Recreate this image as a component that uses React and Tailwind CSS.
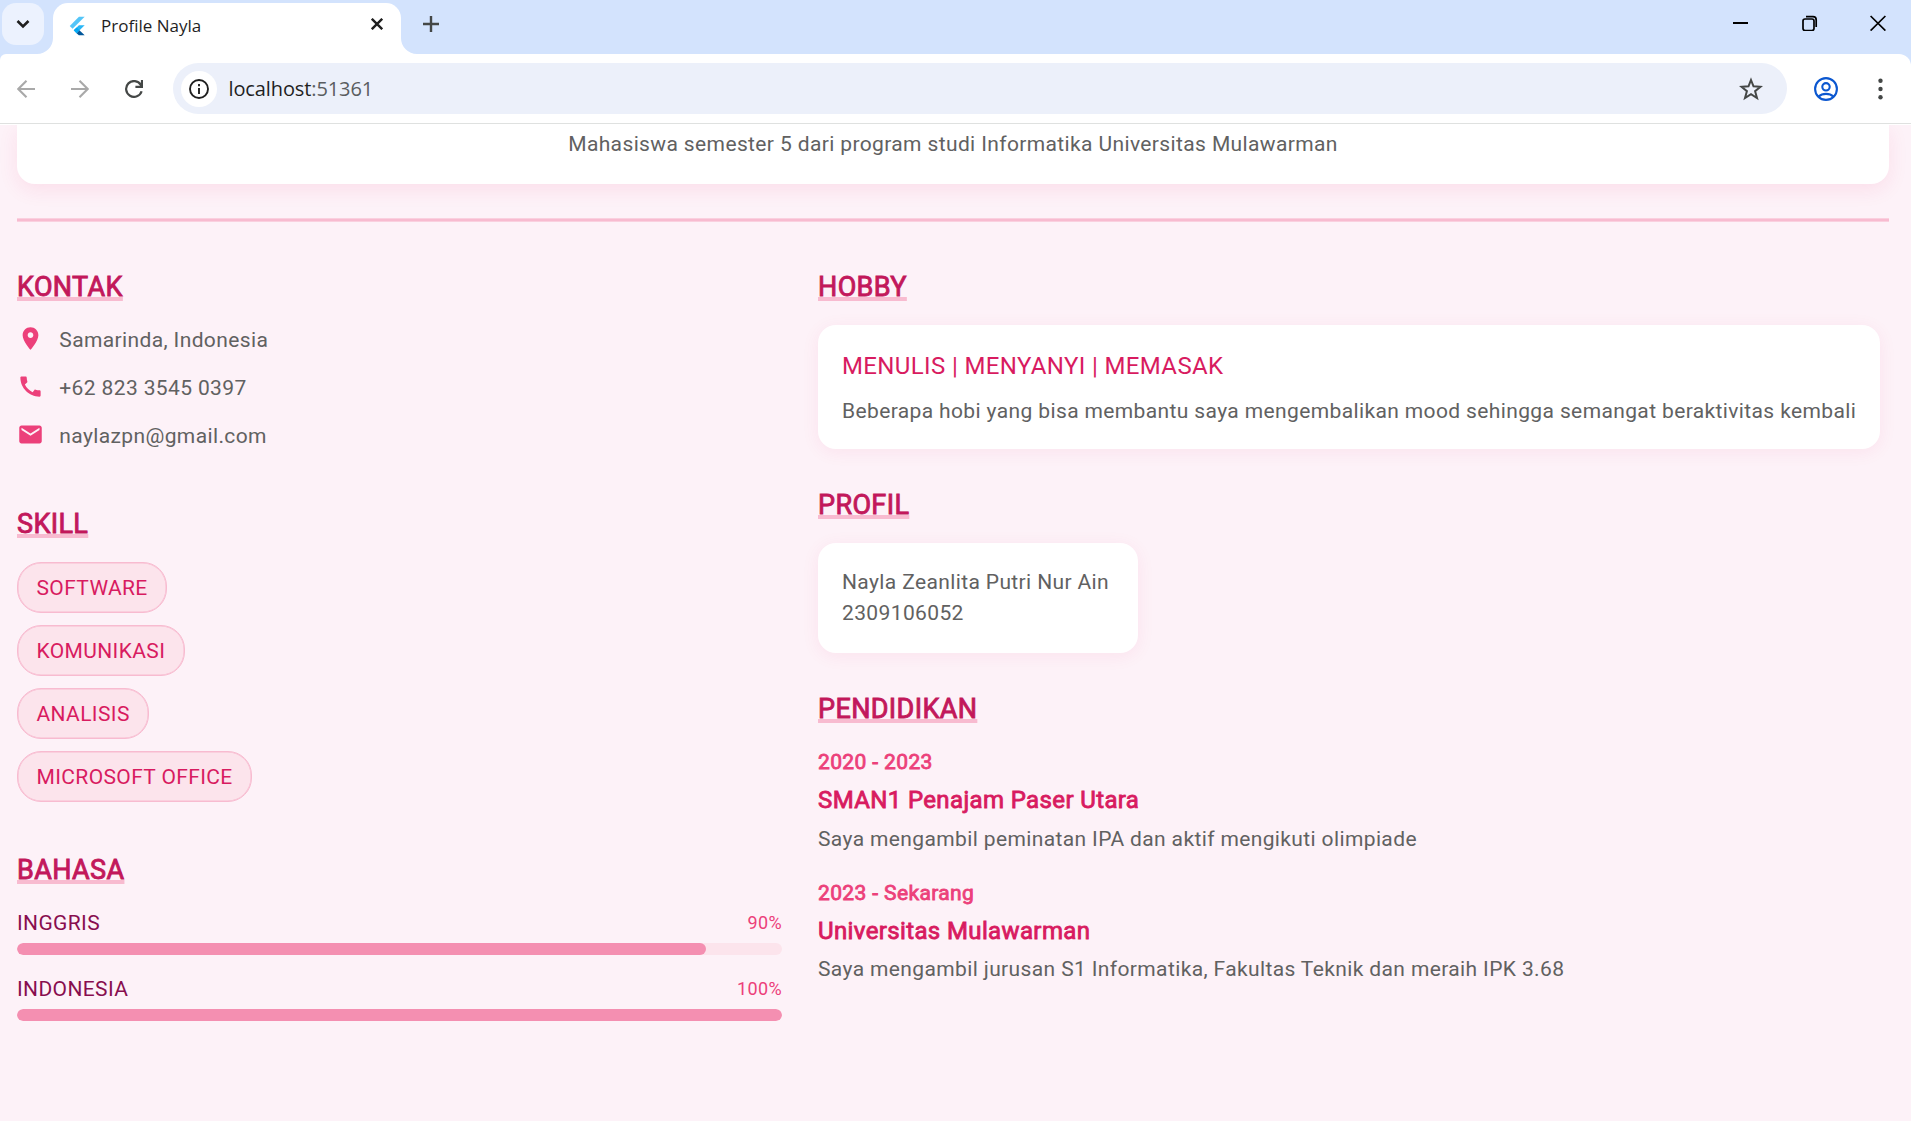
import React from 'react';

const SKILLS = ['SOFTWARE', 'KOMUNIKASI', 'ANALISIS', 'MICROSOFT OFFICE'];

const LANGUAGES = [
  { name: 'INGGRIS', level: 90 },
  { name: 'INDONESIA', level: 100 },
];

const EDUCATION = [
  {
    years: '2020 - 2023',
    school: 'SMAN1 Penajam Paser Utara',
    note: 'Saya mengambil peminatan IPA dan aktif mengikuti olimpiade',
  },
  {
    years: '2023 - Sekarang',
    school: 'Universitas Mulawarman',
    note: 'Saya mengambil jurusan S1 Informatika, Fakultas Teknik dan meraih IPK 3.68',
  },
];

const CONTACTS = [
  {
    text: 'Samarinda, Indonesia',
    d: 'M12 2C8.13 2 5 5.13 5 9c0 5.25 7 13 7 13s7-7.75 7-13c0-3.87-3.13-7-7-7zm0 9.5c-1.38 0-2.5-1.12-2.5-2.5s1.12-2.5 2.5-2.5 2.5 1.12 2.5 2.5-1.12 2.5-2.5 2.5z',
  },
  {
    text: '+62 823 3545 0397',
    d: 'M20.01 15.38c-1.23 0-2.42-.2-3.53-.56-.35-.12-.74-.03-1.01.24l-1.57 1.97c-2.83-1.35-5.48-3.9-6.89-6.83l1.95-1.66c.27-.28.35-.67.24-1.02-.37-1.11-.56-2.3-.56-3.53 0-.54-.45-.99-.99-.99H4.19C3.65 3 3 3.24 3 3.99 3 13.28 10.73 21 20.01 21c.71 0 .99-.63.99-1.18v-3.45c0-.54-.45-.99-.99-.99z',
  },
  {
    text: 'naylazpn@gmail.com',
    d: 'M20 4H4c-1.1 0-1.99.9-1.99 2L2 18c0 1.1.9 2 2 2h16c1.1 0 2-.9 2-2V6c0-1.1-.9-2-2-2zm0 4l-8 5-8-5V6l8 5 8-5v2z',
  },
];

function TabStrip() {
  return (
    <div className="flex h-[54px] items-start bg-[#d3e3fd]">
      <button className="ml-[2px] mt-[3px] flex h-[42px] w-[42px] shrink-0 items-center justify-center rounded-[14px] bg-[#ecf2fe]">
        <svg width="14" height="10" viewBox="0 0 14 10" fill="none" stroke="#1f1f1f" strokeWidth="2.600">
          <path d="M1.500 2l5.500 5.500L12.500 2" />
        </svg>
      </button>
      <div className="-ml-[7px] flex h-full items-end">
        <svg width="16" height="16" viewBox="0 0 16 16" fill="#fff">
          <path d="M16 0v16H0A16 16 0 0 0 16 0z" />
        </svg>
        <div className="flex h-[51px] w-[348px] items-center rounded-t-[15px] bg-white">
          <svg className="ml-[14px] mb-[5px]" width="20" height="20" viewBox="0 0 24 24">
            <path fill="#54c5f8" d="M14.314 1L3.300 12l3.400 3.400L21.200 1z" />
            <path fill="#29b6f6" d="M14.300 11l-6.200 6.200 3.400 3.400L21.200 11z" />
            <path fill="#01579b" d="M11.500 20.600l3.400-3.400L21.200 23.200h-7z" />
            <path fill="#03a9f4" d="M8.100 17.200l3.400-3.400 3.400 3.400-3.400 3.400z" />
          </svg>
          <span className="ml-[14px] mb-[5px] font-['Open_Sans','Noto_Sans',sans-serif] text-[17px] leading-[24px] text-[#1f1f1f]">
            Profile Nayla
          </span>
          <svg className="ml-auto mr-[18px] mb-[9px]" width="12" height="12" viewBox="0 0 12 12" stroke="#1f1f1f" strokeWidth="2.400">
            <path d="M.8.8l10.400 10.400M11.200.8L.8 11.200" />
          </svg>
        </div>
        <svg width="16" height="16" viewBox="0 0 16 16" fill="#fff">
          <path d="M0 0v16h16A16 16 0 0 1 0 0z" />
        </svg>
      </div>
      <svg className="ml-[6px] mt-4" width="16" height="16" viewBox="0 0 16 16" stroke="#444746" strokeWidth="2.400">
        <path d="M0 8h16M8 0v16" />
      </svg>
      <div className="ml-auto flex items-center pr-[25px] pt-[15px]">
        <svg width="15" height="16" viewBox="0 0 15 16" stroke="#000" strokeWidth="2">
          <path d="M0 8h15" />
        </svg>
        <svg className="ml-[54px]" width="16" height="16" viewBox="0 0 16 16" fill="none" stroke="#000" strokeWidth="1.700">
          <rect x="1" y="4" width="11" height="11.500" rx="2" />
          <path d="M4 1.700h7a3.200 3.200 0 0 1 3.200 3.200V12" />
        </svg>
        <svg className="ml-[52px]" width="16" height="16" viewBox="0 0 16 16" stroke="#000" strokeWidth="1.700">
          <path d="M.6 1l14.800 14.600M15.400 1L.6 15.600" />
        </svg>
      </div>
    </div>
  );
}

function Toolbar() {
  return (
    <div className="bg-[#d3e3fd]">
      <div className="flex h-[70px] items-center rounded-tl-[6px] rounded-tr-[12px] border-b border-[#dfe1e0] bg-white">
        <svg className="ml-[17px] shrink-0" width="18" height="18" viewBox="0 0 18 18" fill="none" stroke="#a9a9a9" strokeWidth="2.100">
          <path d="M18 9H1.500M9.500.8L1.300 9l8.200 8.200" />
        </svg>
        <svg className="ml-9 shrink-0" width="18" height="18" viewBox="0 0 18 18" fill="none" stroke="#a9a9a9" strokeWidth="2.100">
          <path d="M0 9h16.500M8.500.8L16.700 9l-8.200 8.200" />
        </svg>
        <svg className="ml-9 shrink-0" width="18" height="18" viewBox="0 0 18 18" fill="none" stroke="#444746" strokeWidth="2.200">
          <path d="M16.600 11.200A7.900 7.900 0 1 1 15.800 4.900L17 6.800M17 0v6.900h-6.600" />
        </svg>
        <div className="ml-[30px] flex h-[51px] w-[1614px] shrink-0 items-center rounded-full bg-[#ecf0fa]">
          <span className="ml-2 flex h-9 w-9 items-center justify-center rounded-full bg-white">
            <svg width="20" height="20" viewBox="0 0 20 20" fill="none" stroke="#1f1f1f" strokeWidth="1.900">
              <circle cx="10" cy="10" r="9" />
              <path d="M10 9v6M10 5v2.200" />
            </svg>
          </span>
          <span className="ml-[11.500px] font-['Open_Sans','Noto_Sans',sans-serif] text-[20px] leading-[28px] tracking-[-0.110px] text-[#1f1f1f]">
            localhost<span className="text-[#5a5d60]">:51361</span>
          </span>
          <svg className="ml-auto mr-6" width="24" height="24" viewBox="0 0 24 24" fill="none" stroke="#444746" strokeWidth="2">
            <path d="M12 3l2.500 6.300 7 .5-5.400 4.400 1.900 6.900-6-3.900-6 3.900 1.900-6.900-5.400-4.400 7-.5z" />
          </svg>
        </div>
        <svg className="ml-[27px] shrink-0" width="24" height="24" viewBox="0 0 24 24" fill="none" stroke="#0b57d0" strokeWidth="2.100">
          <circle cx="12" cy="12" r="10.900" />
          <circle cx="12" cy="9.800" r="3.700" />
          <path d="M4.500 19.600c4-3.600 11-3.600 15 0" />
        </svg>
        <svg className="ml-[39.500px] shrink-0" width="5" height="22" viewBox="0 0 5 22" fill="#444746">
          <circle cx="2.500" cy="2.700" r="2.200" />
          <circle cx="2.500" cy="11" r="2.200" />
          <circle cx="2.500" cy="19.200" r="2.200" />
        </svg>
      </div>
    </div>
  );
}

function Heading({ children }) {
  return (
    <h2 className="text-[27px] leading-[36px] font-normal text-[#c2185b] underline decoration-[#f8bbd0] decoration-[4px] underline-offset-[1px] [-webkit-text-stroke:0.9px_#c2185b]">
      {children}
    </h2>
  );
}

function LeftColumn() {
  return (
    <section className="w-[765px] shrink-0">
      <Heading>KONTAK</Heading>
      <ul className="mt-[11px]">
        {CONTACTS.map((c) => (
          <li key={c.text} className="flex h-12 items-center gap-[15.3px]">
            <svg className="mb-[3px]" width="27" height="27" viewBox="0 0 24 24" fill="#ec407a">
              <path d={c.d} />
            </svg>
            <span className="leading-[30px]">{c.text}</span>
          </li>
        ))}
      </ul>

      <div className="mt-[46px]">
        <Heading>SKILL</Heading>
      </div>
      <ul className="mt-5 flex flex-col items-start gap-3">
        {SKILLS.map((s) => (
          <li
            key={s}
            className="flex h-[51px] items-center rounded-[24px] border border-[#f8bbd0] bg-[#fce4ec] px-[18.500px] pt-[2px] pb-px leading-[30px] text-[#d81b60] shadow-[inset_0_0_0_0.5px_#f8bbd0]"
          >
            {s}
          </li>
        ))}
      </ul>

      <div className="mt-[50px]">
        <Heading>BAHASA</Heading>
      </div>
      <ul className="mt-[23px] flex flex-col gap-[22px]">
        {LANGUAGES.map((l) => (
          <li key={l.name}>
            <div className="flex h-6 items-center justify-between leading-[24px]">
              <span className="text-[#880e4f]">{l.name}</span>
              <span className="text-[18px] text-[#ec407a]">{l.level}%</span>
            </div>
            <div className="mt-2 h-3 overflow-hidden rounded-full bg-[#fce4ec]">
              <div className="h-3 rounded-full bg-[#f48fb1]" style={{ width: `${l.level}%` }} />
            </div>
          </li>
        ))}
      </ul>
    </section>
  );
}

function RightColumn() {
  return (
    <section className="flex flex-1 flex-col items-start">
      <Heading>HOBBY</Heading>
      <div className="mt-5 h-[124.250px] w-[1061.500px] rounded-[18px] bg-white pl-6 pt-6 whitespace-nowrap shadow-[0_3px_18px_rgba(233,30,99,0.07)]">
        <p className="text-[24px] leading-[34px] text-[#d81b60]">MENULIS | MENYANYI | MEMASAK</p>
        <p className="mt-[13px] leading-[30px]">
          Beberapa hobi yang bisa membantu saya mengembalikan mood sehingga semangat beraktivitas kembali
        </p>
      </div>

      <div className="mt-[37.750px]">
        <Heading>PROFIL</Heading>
      </div>
      <div className="mt-[19.750px] h-[110.500px] w-[320.250px] rounded-[18px] bg-white pl-6 pt-6 leading-[31px] shadow-[0_3px_18px_rgba(233,30,99,0.07)]">
        <p>Nayla Zeanlita Putri Nur Ain</p>
        <p>2309106052</p>
      </div>

      <div className="mt-[37.750px]">
        <Heading>PENDIDIKAN</Heading>
      </div>
      <ul className="mt-5 flex flex-col gap-6">
        {EDUCATION.map((e) => (
          <li key={e.years}>
            <p className="leading-[30px] text-[#ec407a] [-webkit-text-stroke:0.8px_#ec407a]">{e.years}</p>
            <p className="mt-[5px] text-[24px] leading-[36px] text-[#d81b60] [-webkit-text-stroke:0.85px_#d81b60]">{e.school}</p>
            <p className="mt-[5.500px] leading-[30px]">{e.note}</p>
          </li>
        ))}
      </ul>
    </section>
  );
}

export default function App() {
  return (
    <div className="flex h-[1121px] w-[1911px] flex-col overflow-hidden bg-[#fdf2f8]">
      <TabStrip />
      <Toolbar />
      <div className="h-px bg-white" />
      <main className="flex-1 overflow-hidden pl-[17px] pr-[22px] font-['Roboto',sans-serif] text-[21px] tracking-[0.375px] text-[#616161]">
        <header className="h-[59px] rounded-b-[18px] bg-white pt-1 text-center leading-[30px] shadow-[0_6px_20px_rgba(233,30,99,0.09)]">
          Mahasiswa semester 5 dari program studi Informatika Universitas Mulawarman
        </header>
        <div className="mt-[34px] h-1 border-y border-[#fad0df] bg-[#f8bbd0]" />
        <div className="mt-[47px] flex gap-9">
          <LeftColumn />
          <RightColumn />
        </div>
      </main>
    </div>
  );
}
